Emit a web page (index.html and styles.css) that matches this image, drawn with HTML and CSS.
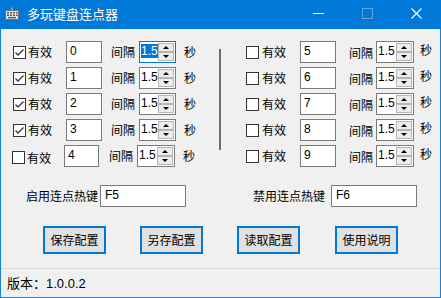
FILE: index.html
```html
<!DOCTYPE html>
<html lang="zh">
<head>
<meta charset="utf-8">
<title>多玩键盘连点器</title>
<link rel="stylesheet" href="styles.css">
</head>
<body>
<div class="window">
  <div class="titlebar">
    <svg class="appicon" width="16" height="14" viewBox="0 0 16 14">
      <path d="M8 0.5 V3" stroke="#cfd8e0" stroke-width="1" fill="none"/>
      <rect x="1.5" y="3.5" width="13" height="9" rx="1" fill="#e4e4e4" stroke="#6d6d6d"/>
      <rect x="3" y="5" width="2" height="1.5" fill="#555"/>
      <rect x="6" y="5" width="2" height="1.5" fill="#555"/>
      <rect x="9" y="5" width="2" height="1.5" fill="#555"/>
      <rect x="12" y="5" width="1.5" height="1.5" fill="#555"/>
      <rect x="3" y="7.5" width="2" height="1.5" fill="#555"/>
      <rect x="6" y="7.5" width="2" height="1.5" fill="#555"/>
      <rect x="9" y="7.5" width="2" height="1.5" fill="#555"/>
      <rect x="12" y="7.5" width="1.5" height="1.5" fill="#555"/>
      <rect x="4" y="10" width="8" height="1.3" fill="#555"/>
    </svg>
    <span class="title">多玩键盘连点器</span>
    <div class="winbtns">
      <span class="wb"><svg width="11" height="11" viewBox="0 0 11 11"><path d="M0 5.5 H11" stroke="#fff" stroke-width="1"/></svg></span>
      <span class="wb"><svg width="11" height="11" viewBox="0 0 11 11"><rect x="0.5" y="0.5" width="10" height="10" fill="none" stroke="#5ea7e6" stroke-width="1"/></svg></span>
      <span class="wb"><svg width="11" height="11" viewBox="0 0 11 11"><path d="M0.5 0.5 L10.5 10.5 M10.5 0.5 L0.5 10.5" stroke="#fff" stroke-width="1.1"/></svg></span>
    </div>
  </div>

  <div class="main">
    <div class="col left">
      <div class="row">
        <label class="chk"><span class="box"><svg width="11" height="11" viewBox="0 0 11 11"><polyline points="1.5,5.5 4,8 9.5,2.5" fill="none" stroke="#333" stroke-width="1.3"/></svg></span>有效</label>
        <div class="field">0</div>
        <span class="lbl">间隔</span>
        <div class="spin focus"><span class="val"><span class="sel">1.5</span></span><span class="btns"><span class="sb up"></span><span class="sb down"></span></span></div>
        <span class="sec">秒</span>
      </div>
      <div class="row">
        <label class="chk"><span class="box"><svg width="11" height="11" viewBox="0 0 11 11"><polyline points="1.5,5.5 4,8 9.5,2.5" fill="none" stroke="#333" stroke-width="1.3"/></svg></span>有效</label>
        <div class="field">1</div>
        <span class="lbl">间隔</span>
        <div class="spin"><span class="val">1.5</span><span class="btns"><span class="sb up"></span><span class="sb down"></span></span></div>
        <span class="sec">秒</span>
      </div>
      <div class="row">
        <label class="chk"><span class="box"><svg width="11" height="11" viewBox="0 0 11 11"><polyline points="1.5,5.5 4,8 9.5,2.5" fill="none" stroke="#333" stroke-width="1.3"/></svg></span>有效</label>
        <div class="field">2</div>
        <span class="lbl">间隔</span>
        <div class="spin"><span class="val">1.5</span><span class="btns"><span class="sb up"></span><span class="sb down"></span></span></div>
        <span class="sec">秒</span>
      </div>
      <div class="row">
        <label class="chk"><span class="box"><svg width="11" height="11" viewBox="0 0 11 11"><polyline points="1.5,5.5 4,8 9.5,2.5" fill="none" stroke="#333" stroke-width="1.3"/></svg></span>有效</label>
        <div class="field">3</div>
        <span class="lbl">间隔</span>
        <div class="spin"><span class="val">1.5</span><span class="btns"><span class="sb up"></span><span class="sb down"></span></span></div>
        <span class="sec">秒</span>
      </div>
      <div class="row last">
        <label class="chk"><span class="box"></span>有效</label>
        <div class="field">4</div>
        <span class="lbl">间隔</span>
        <div class="spin"><span class="val">1.5</span><span class="btns"><span class="sb up"></span><span class="sb down"></span></span></div>
        <span class="sec">秒</span>
      </div>
    </div>

    <div class="divider"></div>

    <div class="col right">
      <div class="row">
        <label class="chk"><span class="box"></span>有效</label>
        <div class="field">5</div>
        <span class="lbl">间隔</span>
        <div class="spin"><span class="val">1.5</span><span class="btns"><span class="sb up"></span><span class="sb down"></span></span></div>
        <span class="sec">秒</span>
      </div>
      <div class="row">
        <label class="chk"><span class="box"></span>有效</label>
        <div class="field">6</div>
        <span class="lbl">间隔</span>
        <div class="spin"><span class="val">1.5</span><span class="btns"><span class="sb up"></span><span class="sb down"></span></span></div>
        <span class="sec">秒</span>
      </div>
      <div class="row">
        <label class="chk"><span class="box"></span>有效</label>
        <div class="field">7</div>
        <span class="lbl">间隔</span>
        <div class="spin"><span class="val">1.5</span><span class="btns"><span class="sb up"></span><span class="sb down"></span></span></div>
        <span class="sec">秒</span>
      </div>
      <div class="row">
        <label class="chk"><span class="box"></span>有效</label>
        <div class="field">8</div>
        <span class="lbl">间隔</span>
        <div class="spin"><span class="val">1.5</span><span class="btns"><span class="sb up"></span><span class="sb down"></span></span></div>
        <span class="sec">秒</span>
      </div>
      <div class="row">
        <label class="chk"><span class="box"></span>有效</label>
        <div class="field">9</div>
        <span class="lbl">间隔</span>
        <div class="spin"><span class="val">1.5</span><span class="btns"><span class="sb up"></span><span class="sb down"></span></span></div>
        <span class="sec">秒</span>
      </div>
    </div>
  </div>

  <div class="hotkeys">
    <div class="hk hk1"><span class="hklbl">启用连点热键</span><div class="field wide">F5</div></div>
    <div class="hk hk2"><span class="hklbl">禁用连点热键</span><div class="field wide">F6</div></div>
  </div>

  <div class="buttons">
    <button class="btn">保存配置</button>
    <button class="btn">另存配置</button>
    <button class="btn">读取配置</button>
    <button class="btn">使用说明</button>
  </div>

  <div class="status">版本：1.0.0.2</div>
</div>
</body>
</html>
```

FILE: styles.css
```css
* { box-sizing: border-box; }
html, body { margin: 0; padding: 0; background: #f0f0f0; }
body {
  font-family: "Liberation Sans", "Noto Sans CJK SC", sans-serif;
  font-size: 12px;
  color: #000;
}
.window {
  width: 441px;
  height: 298px;
  background: #f0f0f0;
  border-left: 1px solid #1a82d8;
  border-right: 1px solid #1a82d8;
  border-bottom: 1px solid #1a82d8;
  display: flex;
  flex-direction: column;
}
.titlebar {
  height: 29px;
  margin: 0 -1px;
  background: #0078d7;
  display: flex;
  align-items: center;
  color: #fff;
}
.appicon { margin-left: 4px; margin-top: -1px; }
.title {
  margin-left: 7px;
  font-family: "Noto Sans CJK SC", sans-serif;
  font-size: 13px;
  line-height: 16px;
  margin-top: -2px;
}
.winbtns { margin-left: auto; display: flex; height: 100%; }
.wb {
  width: 49px;
  display: flex;
  align-items: center;
  justify-content: center;
  margin-top: -2px;
}

.main {
  display: flex;
  padding: 12px 0 0 12px;
}
.col { display: flex; flex-direction: column; gap: 4px; }
.col.left { width: 206px; }
.row {
  display: grid;
  height: 22px;
  align-items: center;
}
.left .row { grid-template-columns: 53px 36px 37px 37px auto; }
.left .row .lbl { padding-left: 9px; }
.left .row .sec { padding-left: 8px; }
.left .row.last {
  grid-template-columns: 52px 35px 38px 38px auto;
  margin-left: -1px;
}
.left .row.last .lbl { padding-left: 10px; }
.left .row.last .chk { margin-top: 3px; }
.right .row { grid-template-columns: 54px 36px 40px 38px auto; }
.right .row .lbl { padding-left: 13px; margin-top: 2px; }
.right .row .sec { padding-left: 6px; margin-top: -4px; }

.divider {
  width: 2px;
  height: 101px;
  margin-top: 8px;
  background: #6e6e6e;
  margin-right: 25px;
}

.chk {
  display: flex;
  align-items: center;
  gap: 2px;
  font-family: "Noto Sans CJK SC", sans-serif;
  line-height: 14px;
}
.right .chk { gap: 3px; }
.box {
  width: 13px;
  height: 13px;
  border: 1px solid #333;
  background: #fff;
  display: flex;
  align-items: center;
  justify-content: center;
}
.box svg { display: block; }
.lbl, .sec, .hklbl {
  font-family: "Noto Sans CJK SC", sans-serif;
  line-height: 14px;
}
.field {
  height: 22px;
  border: 1px solid #7a7a7a;
  background: #fff;
  padding: 2px 0 0 3px;
  line-height: 14px;
  font-family: "Liberation Sans", "Noto Sans CJK SC", sans-serif;
}
.spin {
  height: 22px;
  border: 1px solid #7a7a7a;
  background: #fff;
  display: flex;
}
.spin.focus { border-color: #0078d7; }
.val {
  flex: 1;
  padding: 2px 0 0 1px;
  line-height: 14px;
  overflow: hidden;
  white-space: nowrap;
}
.sel { background: #0078d7; color: #fff; display: inline-block; line-height: 14px; }
.btns {
  width: 17px;
  display: flex;
  flex-direction: column;
  padding: 1px 1px 1px 0;
}
.sb {
  flex: 1;
  border: 1px solid #b5b5b5;
  background: #ececec;
  display: flex;
  align-items: center;
  justify-content: center;
}
.sb::after {
  content: "";
  width: 0;
  height: 0;
  border-left: 3px solid transparent;
  border-right: 3px solid transparent;
}
.sb.up::after { border-bottom: 3px solid #000; }
.sb.down::after { border-top: 3px solid #000; }

.hotkeys {
  display: flex;
  margin-top: 18px;
  height: 22px;
}
.hk { display: flex; align-items: center; }
.hk1 { margin-left: 25px; gap: 2px; }
.hk2 { margin-left: 67px; gap: 6px; }
.field.wide { width: 86px; padding-left: 4px; }

.buttons {
  display: flex;
  gap: 34px;
  margin-top: 19px;
  padding-left: 42px;
}
.btn {
  width: 63px;
  height: 28px;
  border: 2px solid #0078d7;
  background: #e1e1e1;
  font-family: "Noto Sans CJK SC", sans-serif;
  font-size: 12px;
  line-height: 14px;
  padding: 0;
  color: #000;
}
.btn:last-child { margin-left: 1px; }

.status {
  margin-top: 14px;
  border-top: 1px solid #d9d9d9;
  flex: 1;
  display: flex;
  align-items: center;
  padding-left: 6px;
  font-family: "Liberation Sans", "Noto Sans CJK SC", sans-serif;
  font-size: 13px;
  line-height: 15px;
}
```
